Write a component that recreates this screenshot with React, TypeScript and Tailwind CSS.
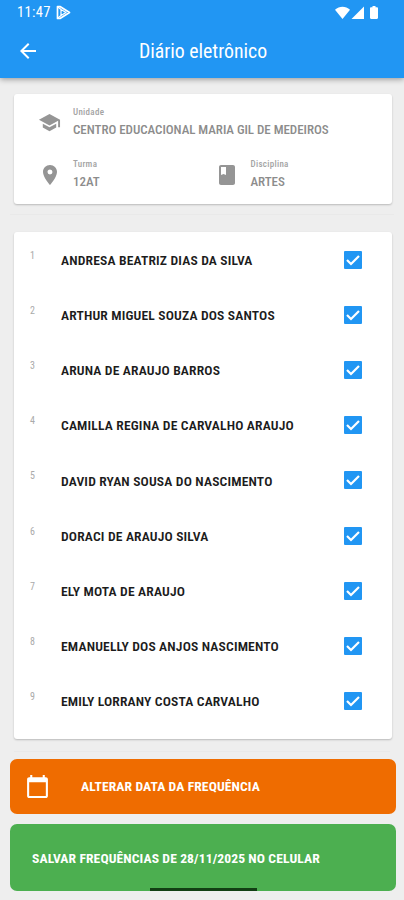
import { useState } from 'react';
import type { ReactNode } from 'react';
import { MdArrowBack, MdCalendarToday, MdPlace, MdSchool } from 'react-icons/md';

const initialStudents = [
    { id: 1, name: 'ANDRESA BEATRIZ DIAS DA SILVA', present: true },
    { id: 2, name: 'ARTHUR MIGUEL SOUZA DOS SANTOS', present: true },
    { id: 3, name: 'ARUNA DE ARAUJO BARROS', present: true },
    { id: 4, name: 'CAMILLA REGINA DE CARVALHO ARAUJO', present: true },
    { id: 5, name: 'DAVID RYAN SOUSA DO NASCIMENTO', present: true },
    { id: 6, name: 'DORACI DE ARAUJO SILVA', present: true },
    { id: 7, name: 'ELY MOTA DE ARAUJO', present: true },
    { id: 8, name: 'EMANUELLY DOS ANJOS NASCIMENTO', present: true },
    { id: 9, name: 'EMILY LORRANY COSTA CARVALHO', present: true }
];

function StatusBar() {
    return (
        <div className="flex h-6 items-center justify-between pl-[17px] pr-[25px]">
            <div className="flex items-center gap-1">
                <span className="w-[35px] pt-px text-[14.5px] leading-6 tracking-[0.35px] font-stretch-normal">11:47</span>
                <svg width="15" height="15" viewBox="0 0 15 15" fill="none" stroke="currentColor" strokeWidth="1.7" strokeLinejoin="round">
                    <path d="M1.500 1.500 4 1.500 13.500 7.500 4 13.500 1.500 13.500z" />
                    <path d="M5 4.500 10 7.500 5 10.500zM2 2 5 4.500M2 13 5 10.500" strokeWidth="1.2" />
                </svg>
            </div>
            <svg className="mt-px" width="44" height="14" viewBox="0 0 44 14" fill="currentColor">
                <path d="M0 3.8C4.300-.2 10.700-.2 15 3.800L7.500 13z" />
                <path d="M29 .5V13H16.500z" />
                <path d="M37.500 0h3v1.200h1.300c.7 0 1.200.5 1.200 1.200v9.400c0 .7-.5 1.200-1.200 1.200h-5.600c-.7 0-1.200-.5-1.200-1.200V2.400c0-.7.5-1.200 1.200-1.200h1.300z" />
            </svg>
        </div>
    );
}

function BookIcon() {
    return (
        <svg width="24" height="24" viewBox="0 0 24 24" fill="currentColor">
            <path fillRule="evenodd" d="M18 2H6c-1.100 0-2 .9-2 2v16c0 1.100.9 2 2 2h12c1.100 0 2-.9 2-2V4c0-1.100-.9-2-2-2zM6 4h5v8L8.500 11 6 12V4z" />
        </svg>
    );
}

function InfoField({ icon, label, value }: { icon: ReactNode; label: string; value: string }) {
    return (
        <div className="flex items-center">
            <div className="flex w-6 justify-center pb-px text-[#959595]">{icon}</div>
            <div className="ml-[11.5px] whitespace-nowrap">
                <div className="text-[9px] font-medium leading-[13px] tracking-[0.3px] text-[#a3a3a3]">{label}</div>
                <div className="text-[13px] font-medium leading-[21px] tracking-[-0.04px] text-[#8c8c8c]">{value}</div>
            </div>
        </div>
    );
}

export default function App() {
    const [students, setStudents] = useState(initialStudents);

    const togglePresence = (id: number) => {
        setStudents(items =>
            items.map(item =>
                item.id === id ? { ...item, present: !item.present } : item
            )
        );
    };

    return (
        <div className="flex h-[900px] w-[404px] flex-col overflow-hidden bg-[#eeeeee] font-['Roboto_Condensed','Roboto',sans-serif] font-stretch-condensed">
            {/* Header */}
            <header className="h-[78px] shrink-0 bg-[#2196f3] text-white shadow-[0_1px_6px_rgba(0,0,0,0.4)]">
                <StatusBar />
                <div className="grid h-[54px] grid-cols-[57px_1fr_55px] items-center">
                    <button className="ml-4" aria-label="Voltar">
                        <MdArrowBack size={24} />
                    </button>
                    <h1 className="pt-px text-center text-[19.8px]">Diário eletrônico</h1>
                </div>
            </header>

            {/* Class info */}
            <section className="ml-[14px] mr-3 mt-4 h-[110px] shrink-0 rounded-[3px] bg-white pl-[23.5px] pt-3 shadow-[0_1px_2px_rgba(0,0,0,0.22)]">
                <InfoField icon={<MdSchool size={23} />} label="Unidade" value="CENTRO EDUCACIONAL MARIA GIL DE MEDEIROS" />
                <div className="mt-[18px] grid grid-cols-[177.500px_1fr]">
                    <InfoField icon={<MdPlace size={24} />} label="Turma" value="12AT" />
                    <InfoField icon={<BookIcon />} label="Disciplina" value="ARTES" />
                </div>
            </section>

            <div className="mx-[10px] mt-[10px] h-px shrink-0 bg-[#e9e9e9]" />

            {/* Students */}
            <section className="ml-[14px] mr-3 mt-[17px] h-[507px] shrink-0 rounded-[3px] bg-white shadow-[0_1px_2px_rgba(0,0,0,0.22)]">
                {students.map((student) => (
                    <div key={student.id} className="flex h-[55.2px] items-center pl-4 pr-[30px]">
                        <span className="w-[31px] pb-[9px] text-[10px] text-[#aaaaaa]">{student.id}</span>
                        <span className="flex-1 whitespace-nowrap pt-px text-[13.6px] font-semibold tracking-[0.16px] text-[#1c1c1c]">{student.name}</span>
                        <button
                            onClick={() => togglePresence(student.id)}
                            className="flex h-[18px] w-[18px] items-center justify-center rounded-[1px] bg-[#2196f3]"
                            aria-label={student.name}
                        >
                            {student.present && (
                                <svg width="14" height="12" viewBox="0 0 14 12" fill="none" stroke="white" strokeWidth="2.2">
                                    <path d="M1 6 5 10 13 2" />
                                </svg>
                            )}
                        </button>
                    </div>
                ))}
            </section>

            <div className="mx-[14px] mt-3 h-px shrink-0 bg-[#e9e9e9]" />

            {/* Actions */}
            <button className="ml-[10px] mr-2 mt-[7px] flex h-[55px] shrink-0 items-center rounded-[7px] bg-[#ef6c00] pl-[15px] text-white">
                <MdCalendarToday size={25} />
                <span className="ml-[31px] text-[13.6px] font-bold tracking-[0.1px]">ALTERAR DATA DA FREQUÊNCIA</span>
            </button>
            <button className="relative ml-[10px] mr-2 mt-[10px] flex h-[67px] shrink-0 items-center rounded-[7px] bg-[#4caf50] pl-[22px] text-white">
                <span className="pt-px text-[13.6px] font-bold tracking-[0.1px]">SALVAR FREQUÊNCIAS DE 28/11/2025 NO CELULAR</span>
                <span className="absolute bottom-0 left-[140px] h-[3px] w-[107px] bg-[#123f14]" />
            </button>
        </div>
    );
}
